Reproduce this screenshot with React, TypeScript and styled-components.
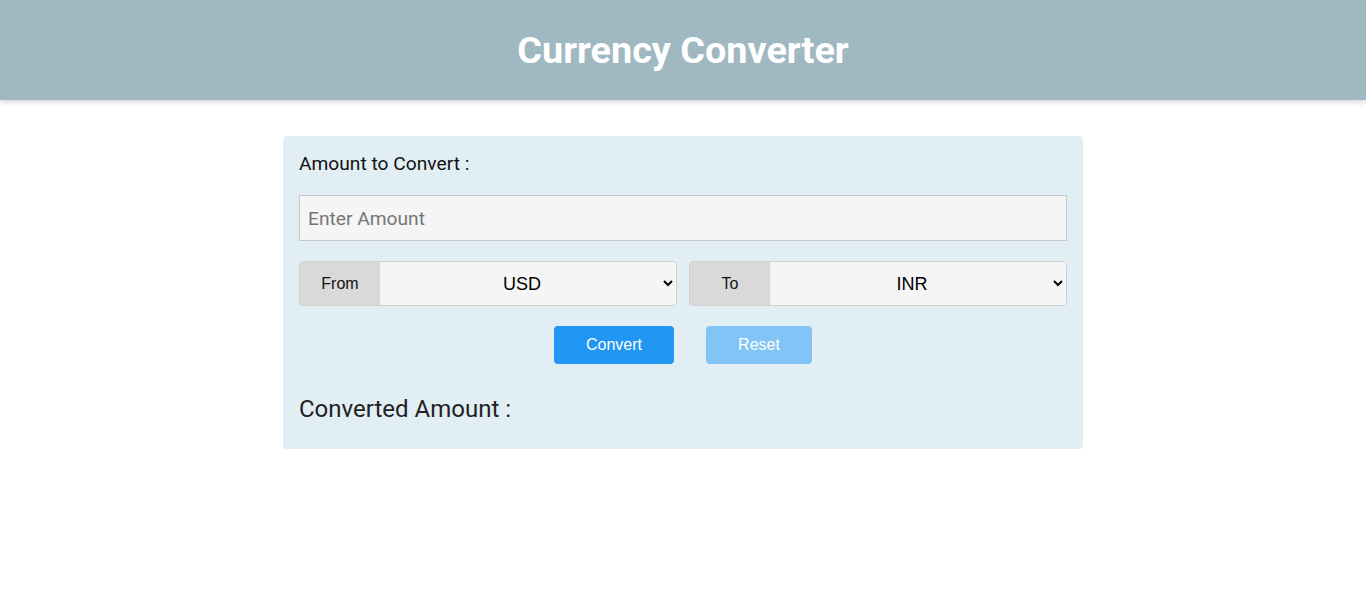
import React, { useState } from "react";
import styled, { createGlobalStyle } from "styled-components";

const Global = createGlobalStyle`
  html, body { margin: 0; padding: 0; background: #ffffff; }
  body { font-family: Roboto, "Liberation Sans", Arial, sans-serif; }
  * { box-sizing: border-box; }
`;

const Header = styled.header`
  height: 100px;
  background: #a0b8c2;
  box-shadow: 0 2px 6px rgba(0, 0, 0, 0.18);
  display: flex;
  align-items: center;
  justify-content: center;
`;

const Title = styled.h1`
  margin: 0;
  font-family: Roboto, sans-serif;
  font-weight: 700;
  font-size: 37.8px;
  color: #ffffff;
`;

const Main = styled.main`
  display: flex;
  justify-content: center;
  padding-top: 36px;
`;

const Card = styled.section`
  width: 800px;
  background: #e1eef4;
  border-radius: 4px;
  padding: 16px 16px 26px;
  display: flex;
  flex-direction: column;
`;

const Label = styled.label`
  font-family: Roboto, sans-serif;
  font-size: 19.2px;
  line-height: 22px;
  color: #111;
  margin-top: 1px;
`;

const AmountInput = styled.input`
  margin-top: 20px;
  height: 46px;
  width: 100%;
  background: #f5f5f5;
  border: 1px solid #c8c8c8;
  padding: 0 8px;
  font-family: Roboto, sans-serif;
  font-size: 19.2px;
  color: #222;
  outline: none;
  &::placeholder { color: #757575; }
`;

const SelectRow = styled.div`
  margin-top: 20px;
  display: grid;
  grid-template-columns: 378px 378px;
  justify-content: space-between;
`;

const Group = styled.div`
  display: flex;
  height: 45px;
  border: 1px solid #cfcfcf;
  border-radius: 4px;
  overflow: hidden;
`;

const GroupLabel = styled.span`
  width: 80px;
  flex: none;
  background: #d9d9d9;
  display: flex;
  align-items: center;
  justify-content: center;
  font-family: "Liberation Sans", Arial, sans-serif;
  font-size: 16px;
  color: #111;
`;

const Select = styled.select`
  flex: 1;
  min-width: 0;
  border: none;
  background: #f5f5f5;
  font-family: "Liberation Sans", Arial, sans-serif;
  font-size: 18px;
  color: #000;
  text-align: center;
  text-align-last: center;
  outline: none;
  padding: 0 2px;
`;

const ButtonRow = styled.div`
  margin-top: 20px;
  display: flex;
  justify-content: center;
  gap: 32px;
`;

const Button = styled.button<{ $w: number; $muted?: boolean }>`
  width: ${(p) => p.$w}px;
  height: 38px;
  border: none;
  border-radius: 4px;
  background: ${(p) => (p.$muted ? "#82c4f6" : "#2196f3")};
  color: #fff;
  font-family: "Liberation Sans", Arial, sans-serif;
  font-size: 16px;
  cursor: pointer;
`;

const Result = styled.h2`
  margin: 31px 0 0;
  font-family: Roboto, sans-serif;
  font-weight: 400;
  font-size: 24px;
  line-height: 28px;
  color: #222;
`;

const currencies = ["USD", "INR", "EUR", "GBP", "JPY", "AUD", "CAD"];

export default function App() {
  const [amount, setAmount] = useState("");
  const [from, setFrom] = useState("USD");
  const [to, setTo] = useState("INR");
  return (
    <>
      <Global />
      <Header>
        <Title>Currency Converter</Title>
      </Header>
      <Main>
        <Card>
          <Label htmlFor="amt">Amount to Convert :</Label>
          <AmountInput
            id="amt"
            placeholder="Enter Amount"
            value={amount}
            onChange={(e) => setAmount(e.target.value)}
          />
          <SelectRow>
            <Group>
              <GroupLabel>From</GroupLabel>
              <Select value={from} onChange={(e) => setFrom(e.target.value)}>
                {currencies.map((c) => (
                  <option key={c}>{c}</option>
                ))}
              </Select>
            </Group>
            <Group>
              <GroupLabel>To</GroupLabel>
              <Select value={to} onChange={(e) => setTo(e.target.value)}>
                {currencies.map((c) => (
                  <option key={c}>{c}</option>
                ))}
              </Select>
            </Group>
          </SelectRow>
          <ButtonRow>
            <Button $w={120}>Convert</Button>
            <Button $w={106} $muted onClick={() => setAmount("")}>
              Reset
            </Button>
          </ButtonRow>
          <Result>Converted Amount :</Result>
        </Card>
      </Main>
    </>
  );
}
